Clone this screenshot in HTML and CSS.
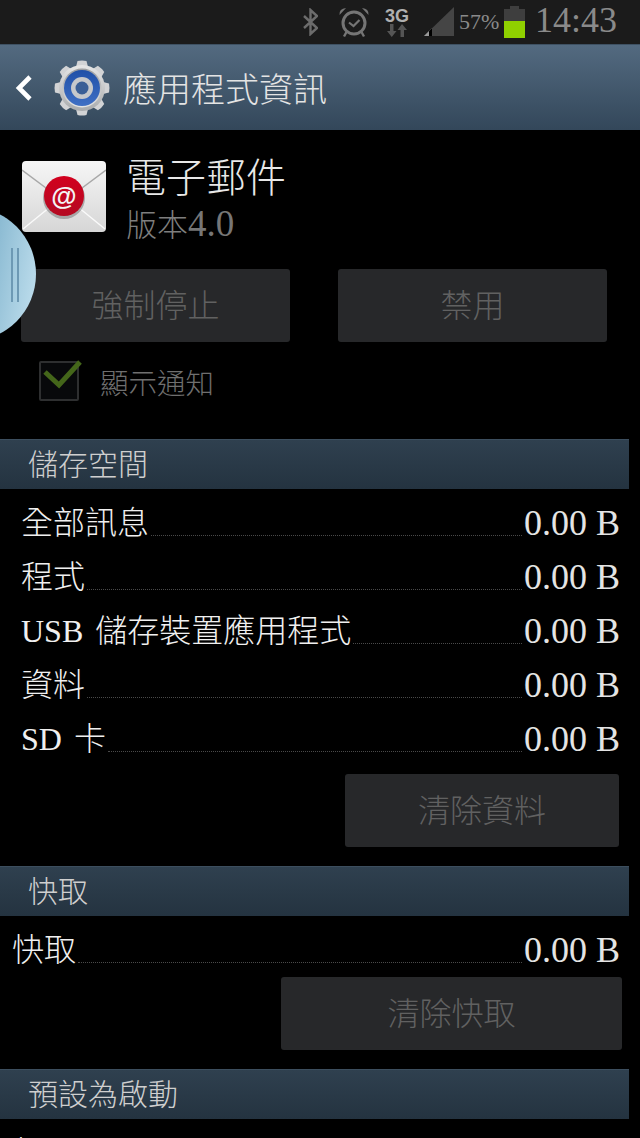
FILE: index.html
```html
<!DOCTYPE html>
<html lang="zh-Hant">
<head>
  <meta charset="UTF-8" />
  <meta name="viewport" content="width=device-width, initial-scale=1" />
  <title>應用程式資訊</title>
  <link rel="stylesheet" href="styles.css">
</head>
<body>
  <div class="screen">
    <div class="statusbar">
      <svg class="ic-bt" width="16" height="28" viewBox="0 0 16 28">
        <path d="M2 8 L15 20 L8.5 26 V2 L15 8 L2 20" fill="none" stroke="#6c6c6c" stroke-width="2.4"/>
      </svg>
      <svg class="ic-alarm" width="32" height="32" viewBox="0 0 32 32">
        <circle cx="16" cy="17" r="11" fill="none" stroke="#757575" stroke-width="3"/>
        <path d="M11 16.5 L15.5 20 L21.5 14" fill="none" stroke="#757575" stroke-width="2.2"/>
        <path d="M1.5 9 Q1 2.5 8 2 Z M30.5 9 Q31 2.5 24 2 Z" fill="#757575"/>
        <path d="M8.5 26 L6 30.5 M23.5 26 L26 30.5" stroke="#757575" stroke-width="2.4"/>
      </svg>
      <div class="net">
        <span class="net-label">3G</span>
        <svg width="20" height="13" viewBox="0 0 20 13">
          <path d="M3 0 H6.5 V7 H9.5 L4.75 13 L0 7 H3 Z" fill="#555"/>
          <path d="M15 0 L20 6 H17 V13 H13.5 V6 H10.5 Z" fill="#555"/>
        </svg>
      </div>
      <svg class="ic-signal" width="31" height="30" viewBox="0 0 31 30">
        <path d="M30 0 V29 H0 Z" fill="#454545"/>
        <path d="M8 21 V29 H0 Z" fill="#9a9a9a"/>
        <path d="M8 21 L5 24 V29 H8 Z" fill="#000"/>
      </svg>
      <span class="battery-text">57%</span>
      <div class="battery"><div class="battery-cap"></div><div class="battery-body"><div class="battery-fill"></div></div></div>
      <span class="clock">14:43</span>
    </div>

    <div class="appbar">
      <svg class="back" width="18" height="28" viewBox="0 0 18 28">
        <path d="M15 3 L4 14 L15 25" fill="none" stroke="#fff" stroke-width="4.6"/>
      </svg>
      <svg class="gear" width="56" height="56" viewBox="0 0 56 56">
        <defs>
          <linearGradient id="steel" x1="0" y1="0" x2="0" y2="1">
            <stop offset="0" stop-color="#e6e6e6"/>
            <stop offset="1" stop-color="#a9abad"/>
          </linearGradient>
          <linearGradient id="steelRing" x1="0" y1="0" x2="0" y2="1">
            <stop offset="0" stop-color="#9a9c9f"/>
            <stop offset="1" stop-color="#e4e4e4"/>
          </linearGradient>
          <linearGradient id="blueDisc" x1="0" y1="0" x2="0" y2="1">
            <stop offset="0" stop-color="#2050a8"/>
            <stop offset="1" stop-color="#3f6fc4"/>
          </linearGradient>
          <path id="tooth" d="M22 7 L23.5 1 Q28 0 32.5 1 L34 7 Z"/>
        </defs>
        <g fill="#d2d3d5">
          <use href="#tooth"/>
          <use href="#tooth" transform="rotate(45 28 28)"/>
          <use href="#tooth" transform="rotate(90 28 28)"/>
          <use href="#tooth" transform="rotate(135 28 28)"/>
          <use href="#tooth" transform="rotate(180 28 28)"/>
          <use href="#tooth" transform="rotate(225 28 28)"/>
          <use href="#tooth" transform="rotate(270 28 28)"/>
          <use href="#tooth" transform="rotate(315 28 28)"/>
        </g>
        <circle cx="28" cy="28" r="23" fill="url(#steel)"/>
        <circle cx="28" cy="28" r="19.5" fill="url(#steelRing)"/>
        <circle cx="28" cy="28" r="18" fill="url(#blueDisc)"/>
        <circle cx="28" cy="28" r="11" fill="#c6c8cb"/>
        <circle cx="28" cy="28" r="6.5" fill="#3b5f96"/>
      </svg>
      <h1 class="appbar-title">應用程式資訊</h1>
    </div>

    <div class="app-head">
      <svg class="mail-icon" width="84" height="71" viewBox="0 0 84 71">
        <defs>
          <linearGradient id="paper" x1="0" y1="0" x2="0" y2="1">
            <stop offset="0" stop-color="#f6f6f6"/>
            <stop offset="1" stop-color="#d6d6d6"/>
          </linearGradient>
          <linearGradient id="seal" x1="0" y1="0" x2="0" y2="1">
            <stop offset="0" stop-color="#d2001e"/>
            <stop offset="1" stop-color="#b40a22"/>
          </linearGradient>
        </defs>
        <rect width="84" height="71" rx="4" fill="url(#paper)"/>
        <path d="M0 9 L28 30 M84 9 L56 30" fill="none" stroke="#a8a8a8" stroke-width="1.5"/>
        <path d="M1 68 L28 46 M83 68 L56 46" fill="none" stroke="#fafafa" stroke-width="1.5"/>
        <circle cx="42" cy="37" r="21" fill="#707070" opacity=".5"/>
        <circle cx="42" cy="35" r="20" fill="url(#seal)"/>
        <text x="42" y="44" class="mail-at" text-anchor="middle">@</text>
      </svg>
      <div class="app-name">
        <div class="app-title">電子郵件</div>
        <div class="app-version">版本<span class="version-num">4.0</span></div>
      </div>
    </div>

    <div class="actions">
      <div class="btn btn-stop">強制停止</div>
      <div class="btn btn-disable">禁用</div>
    </div>

    <div class="notify">
      <div class="checkbox">
        <svg class="check" width="42" height="30" viewBox="0 0 42 30">
          <path d="M4 13 L18 26 L39 3" fill="none" stroke="#44661a" stroke-width="5"/>
        </svg>
      </div>
      <span class="notify-label">顯示通知</span>
    </div>

    <div class="section sec-storage">儲存空間</div>
    <div class="rows">
      <div class="row"><span>全部訊息</span><i class="dots"></i><span class="size">0.00 B</span></div>
      <div class="row"><span>程式</span><i class="dots"></i><span class="size">0.00 B</span></div>
      <div class="row"><span>USB 儲存裝置應用程式</span><i class="dots"></i><span class="size">0.00 B</span></div>
      <div class="row"><span>資料</span><i class="dots"></i><span class="size">0.00 B</span></div>
      <div class="row"><span>SD 卡</span><i class="dots"></i><span class="size">0.00 B</span></div>
    </div>
    <div class="btn btn-clear-data">清除資料</div>

    <div class="section sec-cache">快取</div>
    <div class="rows rows-cache">
      <div class="row"><span>快取</span><i class="dots"></i><span class="size">0.00 B</span></div>
    </div>
    <div class="btn btn-clear-cache">清除快取</div>

    <div class="section sec-default">預設為啟動</div>
    <div class="default-note">未</div>

    <div class="side-handle"><i></i><i></i></div>
  </div>
</body>
</html>
```

FILE: styles.css
```css
html, body {
  margin: 0;
  padding: 0;
  background: #000;
}
.screen {
  position: relative;
  width: 640px;
  height: 1138px;
  overflow: hidden;
  background: #000;
  color: #e8e8e8;
  font-family: "Liberation Serif", "Noto Sans CJK TC", serif;
  font-weight: 300;
}

/* status bar */
.statusbar {
  display: flex;
  align-items: center;
  height: 44px;
  box-sizing: border-box;
  padding-left: 302px;
  background: #1b1b1b;
  color: #8a8a8a;
}
.ic-alarm { margin-left: 20px; }
.net {
  display: flex;
  flex-direction: column;
  align-items: center;
  width: 24px;
  margin-left: 15px;
}
.net-label {
  font-family: "Liberation Sans", sans-serif;
  font-size: 18px;
  font-weight: 700;
  line-height: 16px;
  color: #b0b0b0;
}
.ic-signal { margin-left: 15px; }
.battery-text {
  margin-left: 4px;
  font-size: 22px;
  width: 41px;
  white-space: nowrap;
}
.battery {
  width: 21px;
  margin-left: 4px;
}
.battery-cap {
  width: 9px;
  height: 3px;
  margin: 0 auto;
  background: #3e3e3e;
}
.battery-body {
  display: flex;
  flex-direction: column;
  justify-content: flex-end;
  height: 29px;
  background: #3e3e3e;
}
.battery-fill {
  height: 17px;
  background: #8fd000;
}
.clock {
  margin: 0 0 4px 10px;
  font-size: 36px;
  line-height: 40px;
  white-space: nowrap;
}

/* action bar */
.appbar {
  display: flex;
  align-items: center;
  height: 86px;
  box-sizing: border-box;
  padding-left: 15px;
  background: linear-gradient(#536a80, #33475a);
  border-top: 1px solid #3e5163;
}
.gear { margin-left: 21px; }
.appbar-title {
  margin: 0 0 0 13px;
  font-size: 34px;
  font-weight: 300;
  color: #e4e4e4;
  white-space: nowrap;
}

/* app name block */
.app-head {
  display: flex;
  height: 102px;
  padding: 31px 0 0 22px;
  box-sizing: border-box;
}
.mail-at {
  font-family: "Liberation Sans", sans-serif;
  font-size: 26px;
  font-weight: 700;
  fill: #f4f4f4;
}
.app-name { margin: -9px 0 0 20px; }
.app-title {
  font-size: 40px;
  line-height: 54px;
  color: #e8e8e8;
}
.app-version {
  margin-top: -2px;
  font-size: 31px;
  line-height: 40px;
  color: #7e7e7e;
}
.version-num {
  font-size: 37px;
  color: #767676;
}

/* buttons */
.btn {
  display: flex;
  align-items: center;
  justify-content: center;
  box-sizing: border-box;
  height: 73px;
  padding-bottom: 6px;
  border-radius: 3px;
  background: #27282a;
  color: #616161;
  font-size: 32px;
}
.actions {
  display: flex;
  padding: 37px 0 0 21px;
}
.btn-stop { width: 269px; }
.btn-disable {
  width: 269px;
  margin-left: 48px;
}
.notify {
  display: flex;
  align-items: flex-start;
  box-sizing: border-box;
  height: 59px;
  padding: 19px 0 0 39px;
}
.checkbox {
  position: relative;
  width: 40px;
  height: 40px;
  box-sizing: border-box;
  border: 2px solid #2e2f30;
  border-radius: 2px;
  background: #08090b;
}
.check {
  position: absolute;
  left: 0;
  top: -4px;
}
.notify-label {
  margin-left: 21px;
  font-size: 28.5px;
  line-height: 48px;
  color: #6f6f6f;
}

/* section headers */
.section {
  display: flex;
  align-items: center;
  box-sizing: border-box;
  width: 629px;
  height: 50px;
  padding: 0 0 5px 28px;
  background: linear-gradient(#2f404f, #243340);
  border-top: 1px solid #3c4e5e;
  font-size: 30px;
  color: #cfcfcf;
}
.sec-storage { margin-top: 38px; }
.sec-cache { margin-top: 19px; }
.sec-default { margin-top: 19px; }

/* size rows */
.rows {
  padding: 6px 20px 0 21px;
}
.row {
  display: flex;
  align-items: flex-end;
  height: 54px;
  font-size: 32px;
  line-height: 52px;
  word-spacing: 4px;
  color: #f0f0f0;
  white-space: nowrap;
}
.dots {
  flex: 1;
  margin: 0 2px 13px 2px;
  border-bottom: 1px dotted #4a4a4a;
}
.size {
  font-size: 36px;
  word-spacing: 0;
  color: #e4e4e4;
}
.rows-cache {
  padding-left: 12px;
}
.btn-clear-data {
  width: 274px;
  margin: 9px 0 0 345px;
}
.btn-clear-cache {
  width: 341px;
  margin: 1px 0 0 281px;
}
.default-note {
  padding: 8px 0 0 5px;
  font-size: 32px;
}

/* floating side handle */
.side-handle {
  position: absolute;
  left: -97px;
  top: 207px;
  width: 133px;
  height: 134px;
  border-radius: 50%;
  background: linear-gradient(100deg, #7fb2cc 55%, #c4e2f0);
}
.side-handle i {
  position: absolute;
  top: 41px;
  width: 2px;
  height: 54px;
  background: #6d99b4;
}
.side-handle i:first-child { left: 108px; }
.side-handle i:last-child { left: 114px; }
```
